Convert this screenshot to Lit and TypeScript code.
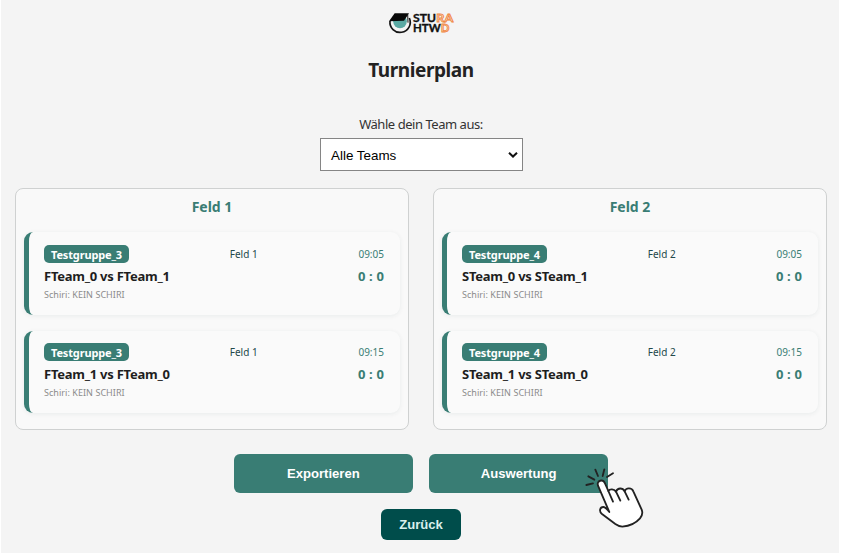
import { LitElement, html, css, svg } from "lit";
import { customElement, property } from "lit/decorators.js";

interface Match {
  group: string;
  teams: string;
  field: string;
  time: string;
}

@customElement("stura-logo")
class SturaLogo extends LitElement {
  static styles = css`
    :host { display: block; width: 85px; height: 35px; }
    svg { display: block; }
    .word { font: 700 34px "Lato", "Liberation Sans", sans-serif; fill: #111; stroke: #111; stroke-width: 1; }
    .low { font-size: 32px; }
    .accent { font: 700 34px "Lato", "Liberation Sans", sans-serif; fill: #fbe3d3; stroke: #f0843c; stroke-width: 2.4; }
    .accent.low { font-size: 31px; }
  `;
  render() {
    return html`<svg width="85" height="35" viewBox="0 0 255 105">
      <circle cx="60" cy="49" r="20.5" fill="#5aa9a3" />
      <path d="M30 48 A30.500 30.500 0 1 0 88 39" fill="none" stroke="#151515" stroke-width="5" />
      <path d="M44 25 L87 25 L72 47 L27 49 Z" fill="#080808" />
      <path d="M83 27 L84 53" stroke="#151515" stroke-width="3" />
      ${svg`<text class="word" x="99" y="52" textLength="69" lengthAdjust="spacingAndGlyphs">STU</text>
      <text class="word low" x="99" y="80" textLength="83" lengthAdjust="spacingAndGlyphs">HTW</text>
      <text class="accent" x="169" y="52" textLength="51" lengthAdjust="spacingAndGlyphs">RA</text>
      <text class="accent low" x="183" y="80" textLength="25" lengthAdjust="spacingAndGlyphs">D</text>`}
    </svg>`;
  }
}

@customElement("match-card")
class MatchCard extends LitElement {
  @property({ attribute: false }) match!: Match;
  static styles = css`
    :host {
      display: block; box-sizing: border-box; height: 82.5px;
      border-left: 5px solid #397d74; border-radius: 9px;
      padding: 12.5px 16px 0 15px; background: #fafafa;
      box-shadow: 0 1px 5px rgba(0, 60, 50, 0.07);
      font-family: "Noto Sans", sans-serif; white-space: nowrap;
    }
    .row { display: flex; justify-content: space-between; align-items: center; }
    .head { height: 18px; font-size: 10px; }
    .badge {
      box-sizing: border-box; width: 85px; height: 18px; border-radius: 5px;
      background: #397d74; color: #fff; text-align: center;
      font-weight: 700; font-size: 11px; line-height: 19px; letter-spacing: -0.15px;
    }
    .field { color: #23484a; }
    .time { color: #397d74; }
    .main { height: 18px; margin-top: 4px; font-weight: 700; font-size: 13px; line-height: 18px; }
    .teams { color: #1e1e1e; letter-spacing: -0.25px; }
    .score { color: #397d74; letter-spacing: 0.15px; }
    .ref { margin-top: 3px; color: #8b8b8b; font-size: 9px; line-height: 14px; letter-spacing: 0.05px; }
  `;
  render() {
    const m = this.match;
    return html`
      <div class="row head">
        <span class="badge">${m.group}</span>
        <span class="field">${m.field}</span>
        <span class="time">${m.time}</span>
      </div>
      <div class="row main">
        <span class="teams">${m.teams}</span>
        <span class="score">0 : 0</span>
      </div>
      <div class="ref">Schiri: KEIN SCHIRI</div>
    `;
  }
}

@customElement("click-hand")
class ClickHand extends LitElement {
  static styles = css`
    :host { display: block; width: 100px; height: 100px; pointer-events: none; }
    svg { display: block; }
  `;
  render() {
    return html`<svg width="100" height="100" viewBox="0 0 300 300" fill="none" stroke="#222" stroke-width="5.5" stroke-linecap="round" stroke-linejoin="round">
      <path d="M49 135 L69 130 M55 109 L73 119 M76 89 L84 108 M103 88 L98 108 M111 111 L129 100" />
      <path fill="#fff" d="M84 137 C79 121 99 116 105 130 L115 153 C120 146 132 147 138 155 C143 142 158 143 164 154 C168 142 186 143 190 154 L215 209 C219 219 216 228 210 235 C197 250 178 258 157 260 C149 260 143 257 136 252 L96 222 C86 214 90 201 100 201 C106 201 111 207 118 216 Z" />
      <path d="M115 153 L129 185 M138 155 L151 182 M164 154 L176 179" />
    </svg>`;
  }
}

@customElement("app-root")
class AppRoot extends LitElement {
  static styles = css`
    :host { display: block; height: 555px; overflow: hidden; background: #fff; font-family: "Noto Sans", sans-serif; }
    .page {
      box-sizing: border-box; position: relative; display: flex; flex-direction: column; align-items: center;
      width: 838px; height: 553px; margin: 0 0 0 1px; padding: 4px 0 0 2px;
      background: #f4f4f4;
    }
    .wrap { padding: 1px 0 0 2px; }
    h1 { margin: 16px 0 0; height: 28px; line-height: 28px; font-size: 19px; font-weight: 700; letter-spacing: -0.42px; color: #222; }
    label { display: block; margin-top: 30px; height: 20px; line-height: 20px; font-size: 13px; letter-spacing: -0.46px; color: #333; }
    .select {
      box-sizing: border-box; display: flex; align-items: center; justify-content: space-between;
      width: 203px; height: 33px; margin-top: 4px; padding: 1px 4px 0 10.5px;
      border: 1px solid #858585; background: #fff;
      font: 13.4px "Liberation Sans", sans-serif; color: #000;
    }
    .fields { display: grid; grid-template-columns: 394px 394px; gap: 24px; margin-top: 17px; }
    .panel {
      box-sizing: border-box; height: 242px; padding: 8px 8px 0; border: 1px solid #cfd1d1; border-radius: 8px;
      background: #f9f9f9; display: flex; flex-direction: column;
    }
    h2 { margin: 0 0 15px; height: 20px; line-height: 20px; font-size: 14px; font-weight: 700; text-align: center; color: #397d74; }
    .cards { display: flex; flex-direction: column; gap: 16px; }
    .actions { display: flex; gap: 16px; margin-top: 24px; }
    button {
      border: 0; padding: 0; border-radius: 6px; color: #fff; background: #397d74;
      font: 700 13.1px "Liberation Sans", sans-serif; width: 179.3px; height: 39px;
    }
    .back { width: 80px; height: 31px; margin-top: 16px; background: #004d4b; color: #d9f0ec; }
    .hand { position: absolute; left: 569px; top: 440px; }
  `;

  private fields = [
    { name: "Feld 1", group: "Testgruppe_3", prefix: "F" },
    { name: "Feld 2", group: "Testgruppe_4", prefix: "S" },
  ];

  private matches(f: { name: string; group: string; prefix: string }): Match[] {
    return [
      { group: f.group, field: f.name, time: "09:05", teams: `${f.prefix}Team_0 vs ${f.prefix}Team_1` },
      { group: f.group, field: f.name, time: "09:15", teams: `${f.prefix}Team_1 vs ${f.prefix}Team_0` },
    ];
  }

  render() {
    return html`<div class="page">
      <div class="wrap"><stura-logo></stura-logo></div>
      <h1>Turnierplan</h1>
      <label>Wähle dein Team aus:</label>
      <div class="select">
        <span>Alle Teams</span>
        <svg width="10" height="8" viewBox="0 0 10 8" fill="none" stroke="#111" stroke-width="2"><path d="M1 1.7 L5 5.5 L9 1.7" /></svg>
      </div>
      <div class="fields">
        ${this.fields.map(
          (f) => html`<section class="panel">
            <h2>${f.name}</h2>
            <div class="cards">${this.matches(f).map((m) => html`<match-card .match=${m}></match-card>`)}</div>
          </section>`
        )}
      </div>
      <div class="actions"><button>Exportieren</button><button>Auswertung</button></div>
      <button class="back">Zurück</button>
      <click-hand class="hand"></click-hand>
    </div>`;
  }
}
